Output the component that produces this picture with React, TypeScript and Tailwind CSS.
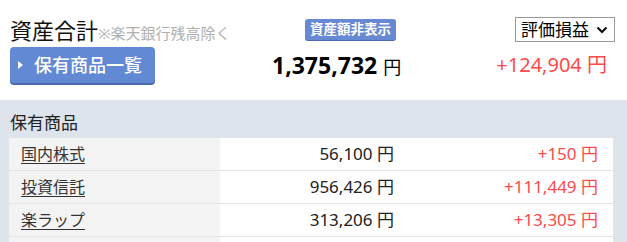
const FONT = "font-['Noto_Sans','Noto_Sans_CJK_JP',sans-serif]";

interface Holding {
  name: string;
  amount: string;
  gain: string;
}

const holdings: Holding[] = [
  { name: "国内株式", amount: "56,100", gain: "+150" },
  { name: "投資信託", amount: "956,426", gain: "+111,449" },
  { name: "楽ラップ", amount: "313,206", gain: "+13,305" },
];

export default function App() {
  return (
    <div className={`${FONT} w-[627px] h-[242px] overflow-hidden bg-white text-[#222]`}>
      {/* summary header */}
      <div className="h-[100px] pt-[17px]">
        <div className="flex items-center h-[25px] pl-[10px] pr-[12px]">
          <div className="w-[295px] flex items-baseline">
            <span className="text-[22px] leading-none text-[#111]">資産合計</span>
            <span className="text-[15px] leading-none text-[#b0b0b0]">※楽天銀行残高除く</span>
          </div>
          <span className="h-[21px] px-[5px] rounded-[3px] bg-[#6788d2] text-white text-[13.5px] font-bold leading-[21px] shadow-[0_1px_0_#4d6bb0]">
            資産額非表示
          </span>
          <div className="flex-1 flex justify-end">
            <div className="w-[100px] h-[25px] border border-[#999] bg-white flex items-center justify-between pl-[5px] pr-[6px]">
              <span className="text-[17px] leading-none text-black">評価損益</span>
              <svg width="12" height="8" viewBox="0 0 12 8">
                <path d="M1.5 1.5 L6 6 L10.5 1.5" fill="none" stroke="#111" strokeWidth="2.2" />
              </svg>
            </div>
          </div>
        </div>
        <div className="flex items-center mt-[5px] pl-[10px] pr-[20px]">
          <div className="w-[262px]">
            <button className="w-[145px] h-[36px] rounded-[4px] bg-[#6289d3] shadow-[0_2px_0_#4a6ab0] flex items-center pl-[8px] text-white">
              <svg width="6" height="8" viewBox="0 0 6 8" className="mr-[10px]">
                <path d="M0 0 L5 4 L0 8 Z" fill="#fff" />
              </svg>
              <span className="text-[18px] leading-none font-medium">保有商品一覧</span>
            </button>
          </div>
          <div className="flex items-baseline">
            <span className="text-[23px] font-bold text-black">1,375,732</span>
            <span className="text-[18px] ml-[6px] text-black">円</span>
          </div>
          <div className="flex-1 text-right text-[20px] text-[#ff4a4a]">+124,904 円</div>
        </div>
      </div>

      {/* holdings */}
      <div className="bg-[#dde4ec] h-[142px] pl-[9px] pr-[14px] pt-[10px]">
        <div className="pl-[1px] text-[17px] leading-[26px] text-[#222] h-[28px]">保有商品</div>
        <div className="flex flex-col gap-[1px]">
          {holdings.map((h) => (
            <div key={h.name} className="flex h-[32px] items-center bg-white text-[17px]">
              <div className="w-[211px] h-full bg-[#f3f3f3] flex items-center pl-[12px]">
                <a href="#" className="text-[16px] underline underline-offset-[3px] text-[#333]">
                  {h.name}
                </a>
              </div>
              <div className="w-[174px] text-right text-[#222]">{h.amount} 円</div>
              <div className="flex-1 text-right pr-[15px] text-[#ff4a4a]">{h.gain} 円</div>
            </div>
          ))}
          <div className="flex h-[32px] bg-white">
            <div className="w-[211px] h-full bg-[#f3f3f3]" />
          </div>
        </div>
      </div>
    </div>
  );
}
